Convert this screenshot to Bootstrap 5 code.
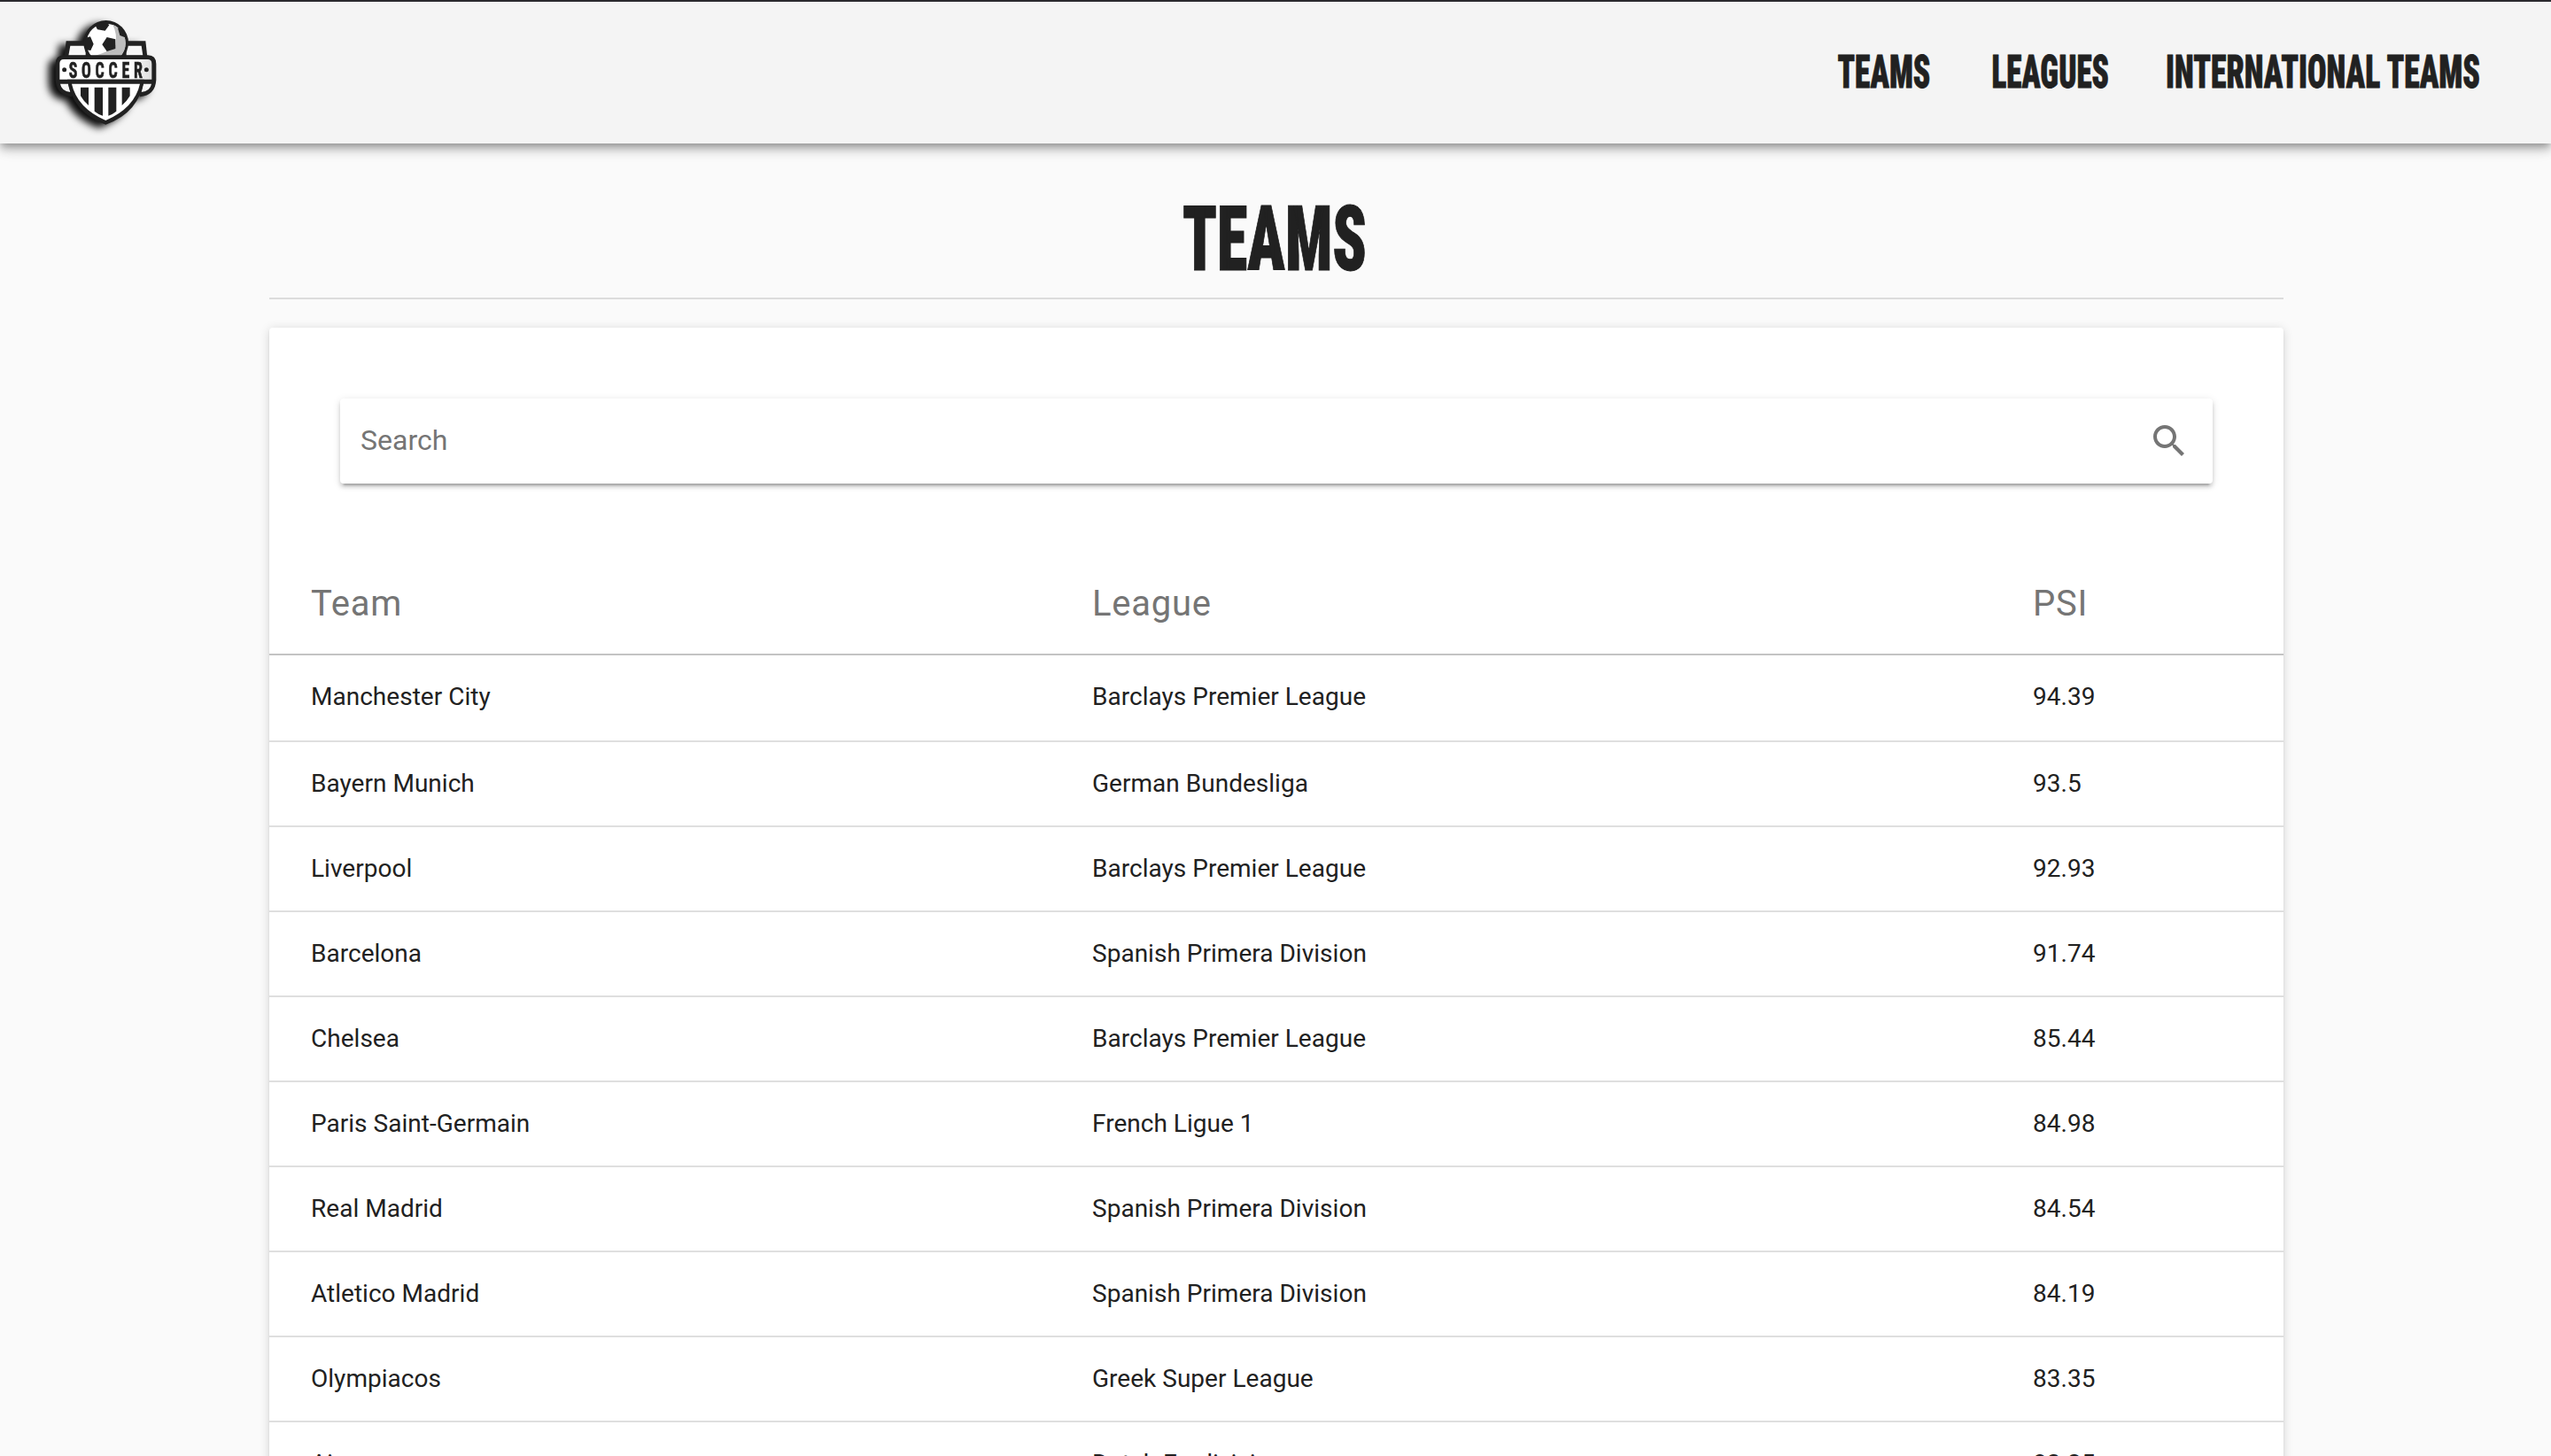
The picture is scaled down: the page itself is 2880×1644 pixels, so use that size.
<!DOCTYPE html>
<html lang="en">
<head>
<meta charset="utf-8">
<title>Teams</title>
<link rel="stylesheet" href="https://cdn.jsdelivr.net/npm/bootstrap@5.3.0/dist/css/bootstrap.min.css">
<style>
html, body { height: 100%; overflow: hidden; }
body { background: #fafafa; color: #212121; font-family: Roboto, sans-serif; }
.topbar { height: 162px; border-top: 2px solid #2a292e; background: #f4f4f4; padding: 0 79px 0 60px; box-shadow: 0 4px 8px -2px rgba(0,0,0,.28), 0 8px 10px 0 rgba(0,0,0,.16), 0 2px 20px 0 rgba(0,0,0,.12); }
.crest { width: 120px; height: 122px; filter: drop-shadow(-8px 4px 4px rgba(0,0,0,.95)); }
.navset { gap: 64px; }
.wordart { display: block; overflow: visible; fill: #212121; stroke: #212121; font-family: Roboto, sans-serif; font-weight: 900; font-stretch: 75%; }
.wordart-nav { font-size: 51.5px; stroke-width: .8px; height: 46px; }
.wordart-title { font-size: 101.5px; stroke-width: 1px; }
.sheet { width: 2274px; margin-left: 304px; }
.title-row { height: 176px; border-bottom: 2px solid #dcdcdc; padding-top: 69px; }
.panel { margin-top: 32px; height: 1400px; background: #fff; border-radius: 4px; }
.raised { box-shadow: 0 6px 2px -4px rgba(0,0,0,.2), 0 4px 4px 0 rgba(0,0,0,.14), 0 2px 10px 0 rgba(0,0,0,.12); }
.panel.raised { box-shadow: 0 4px 2px -2px rgba(0,0,0,.2), 0 2px 2px 0 rgba(0,0,0,.1), 0 2px 12px 0 rgba(0,0,0,.16); }
.search-wrap { padding: 80px 80px 0; }
.search-box { height: 96px; border-radius: 4px; padding: 0 25px 0 23px; background: #fff; }
.search-box input, .search-box input:focus { font-size: 32px; color: #212121; background: transparent; padding: 0 0 2px; border: 0; box-shadow: none; }
.search-box input::placeholder { color: #757575; }
.standings { table-layout: fixed; border-collapse: separate; border-spacing: 0; margin: 0; width: 100%; }
.standings th { height: 194px; padding: 79px 0 0 47px; font-size: 40px; line-height: 1; font-weight: 400; letter-spacing: .75px; color: #757575; border-bottom: 2px solid #c3c3c3; vertical-align: middle; }
.standings td { height: 96px; padding: 0 0 0 47px; font-size: 28px; line-height: 1; letter-spacing: .02px; border-bottom: 2px solid #dfdfdf; vertical-align: middle; }
.standings tbody tr:first-child td { height: 98px; padding-bottom: 2px; }
</style>
</head>
<body>
<nav class="topbar d-flex align-items-center justify-content-between position-relative">
  <a href="#" class="d-block" aria-label="Soccer home">
    <svg class="crest d-block" viewBox="180 60 360 366">
      <defs>
        <linearGradient id="plate" x1="0" x2="1"><stop offset="0" stop-color="#fff"/><stop offset=".75" stop-color="#fff"/><stop offset="1" stop-color="#ddd"/></linearGradient>
      </defs>
      <path fill="#212121" d="M224 136H493L500 200H216Z"/>
      <path fill="#f6f6f6" d="M238 152H290V185H232Z M428 152H479L484 185H428Z"/>
      <circle cx="359" cy="142" r="76" fill="#212121"/>
      <circle cx="359" cy="143" r="66" fill="#fff"/>
      <path fill="#bdbdbd" d="M382 81Q398 112 391 150Q370 172 322 186H409Q425 168 425 143Q424 98 382 81Z"/>
      <path fill="#212121" d="M346 148L362 123L391 130V162L362 171Z M322 82L330 97L356 101L370 82L360 72Z M288 126L306 121L317 146L307 168L290 166Z M399 92L406 117L424 124L426 112L410 88Z"/>
      <path fill="#212121" d="M216 184H501Q529 184 529 214V268Q526 320 474 325L460 275H256L243 325Q192 320 188 268V214Q188 184 216 184Z"/>
      <path fill="url(#plate)" d="M216 198H500Q514 198 514 213V266H202V213Q202 198 216 198Z"/>
      <path fill="#f6f6f6" d="M204 281H231L238 309Q208 305 204 281Z M513 281H486L479 309Q509 305 513 281Z"/>
      <path fill="#212121" d="M228 266H488Q472 378 358 419Q244 378 228 266Z"/>
      <path fill="#fff" d="M243 281H474Q456 362 358 405Q261 362 243 281Z"/>
      <path fill="#212121" d="M273 293H300V354Q283 340 273 322Z M320 293H348V389Q332 384 320 374Z M367 293H394V374Q382 384 367 389Z M413 293H440V322Q430 340 413 354Z"/>
      <circle cx="218" cy="233" r="7.5" fill="#212121"/><circle cx="496" cy="233" r="7.5" fill="#212121"/>
      <text transform="translate(233 261) scale(.68 1)" x="0" y="0" textLength="367" lengthAdjust="spacing" font-family="Roboto, sans-serif" font-stretch="75%" font-weight="700" font-size="79" fill="#212121" stroke="#212121" stroke-width="2">SOCCER</text>
    </svg>
  </a>
  <div class="navset d-flex">
    <a href="#" aria-label="Teams"><svg class="wordart wordart-nav" width="110" height="46"><text x=".4" y="39.7" textLength="105" lengthAdjust="spacingAndGlyphs">TEAMS</text></svg></a>
    <a href="#" aria-label="Leagues"><svg class="wordart wordart-nav" width="133" height="46"><text x=".4" y="39.7" textLength="132.6" lengthAdjust="spacingAndGlyphs">LEAGUES</text></svg></a>
    <a href="#" aria-label="International teams"><svg class="wordart wordart-nav" width="356" height="46"><text x="0" y="39.7" textLength="355" lengthAdjust="spacingAndGlyphs">INTERNATIONAL TEAMS</text></svg></a>
  </div>
</nav>
<main class="sheet">
  <div class="title-row d-flex justify-content-center">
    <svg class="wordart wordart-title" role="heading" aria-level="1" width="212" height="76"><text x="0" y="73.5" textLength="208" lengthAdjust="spacingAndGlyphs">TEAMS</text></svg>
  </div>
  <section class="panel raised">
    <div class="search-wrap">
      <div class="search-box raised d-flex align-items-center">
        <input class="form-control flex-grow-1" type="text" placeholder="Search" aria-label="Search">
        <svg class="flex-shrink-0" width="48" height="48" viewBox="0 0 24 24" fill="#757575"><path d="M15.5 14h-.79l-.28-.27C15.41 12.59 16 11.11 16 9.5 16 5.91 13.09 3 9.5 3S3 5.91 3 9.5 5.91 16 9.5 16c1.61 0 3.09-.59 4.23-1.57l.27.28v.79l5 4.99L20.49 19l-4.99-5zm-6 0C7.01 14 5 11.99 5 9.5S7.01 5 9.5 5 14 7.01 14 9.5 11.99 14 9.5 14z"/></svg>
      </div>
    </div>
    <table class="standings">
      <colgroup><col style="width:882px"><col style="width:1062px"><col></colgroup>
      <thead><tr><th>Team</th><th>League</th><th>PSI</th></tr></thead>
      <tbody>
        <tr><td>Manchester City</td><td>Barclays Premier League</td><td>94.39</td></tr>
        <tr><td>Bayern Munich</td><td>German Bundesliga</td><td>93.5</td></tr>
        <tr><td>Liverpool</td><td>Barclays Premier League</td><td>92.93</td></tr>
        <tr><td>Barcelona</td><td>Spanish Primera Division</td><td>91.74</td></tr>
        <tr><td>Chelsea</td><td>Barclays Premier League</td><td>85.44</td></tr>
        <tr><td>Paris Saint-Germain</td><td>French Ligue 1</td><td>84.98</td></tr>
        <tr><td>Real Madrid</td><td>Spanish Primera Division</td><td>84.54</td></tr>
        <tr><td>Atletico Madrid</td><td>Spanish Primera Division</td><td>84.19</td></tr>
        <tr><td>Olympiacos</td><td>Greek Super League</td><td>83.35</td></tr>
        <tr><td>Ajax</td><td>Dutch Eredivisie</td><td>83.25</td></tr>
      </tbody>
    </table>
  </section>
</main>
<script src="https://cdn.jsdelivr.net/npm/bootstrap@5.3.0/dist/js/bootstrap.bundle.min.js"></script>
</body>
</html>
